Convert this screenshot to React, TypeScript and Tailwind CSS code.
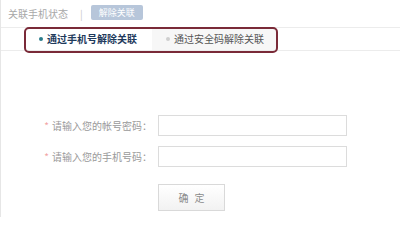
import React from "react";

const font = { fontFamily: '"Noto Sans CJK SC", "Noto Sans", sans-serif' };

function FormRow({ label }: { label: string }) {
  return (
    <div className="flex items-center h-[21px]">
      <div className="w-[118px] text-right text-[10px] leading-none text-[#9a9a9a] whitespace-nowrap">
        <span className="text-[#f2a5a5] mr-[3px]">*</span>
        {label}
      </div>
      <input
        className="ml-[6px] w-[189px] h-[21px] border border-[#dcdcdc] bg-white outline-none"
        type="text"
      />
    </div>
  );
}

export default function App() {
  return (
    <div
      className="relative w-[400px] h-[217px] overflow-hidden bg-white border-l border-[#e6e6e6]"
      style={font}
    >
      {/* status bar */}
      <div className="flex items-center h-[28px] border-b border-[#ececec] pl-[7px]">
        <span className="text-[10px] leading-none text-[#a8a8a8]">关联手机状态</span>
        <span className="ml-[12px] text-[10px] leading-none text-[#c8c8c8]">|</span>
        <span className="ml-[8px] mt-[-3px] flex items-center justify-center w-[52px] h-[15px] rounded-[2px] bg-[#b7c6da] text-[9px] leading-none text-white">
          解除关联
        </span>
      </div>

      {/* tabs */}
      <div className="flex h-[23px] border-b border-[#ececec] pl-[25px]">
        <div className="flex items-center w-[126px] bg-white pl-[13px]">
          <span className="w-[4px] h-[4px] rounded-full bg-[#2b7d8c]" />
          <span className="ml-[4px] text-[10px] leading-none font-bold text-[#1e3a5c]">
            通过手机号解除关联
          </span>
        </div>
        <div className="flex items-center w-[125px] bg-[#f7f7f7] pl-[14px]">
          <span className="w-[4px] h-[4px] rounded-full bg-[#cfcfcf]" />
          <span className="ml-[4px] text-[10px] leading-none text-[#555]">
            通过安全码解除关联
          </span>
        </div>
      </div>

      {/* annotation around tabs */}
      <div className="absolute left-[23px] top-[27px] w-[254px] h-[26px] rounded-[5px] border-2 border-[#7a2a38]" />

      {/* form */}
      <div className="flex flex-col pl-[33px] pt-[64px] gap-[10px]">
        <FormRow label="请输入您的帐号密码：" />
        <FormRow label="请输入您的手机号码：" />
        <div className="pl-[124px] pt-[6px]">
          <button className="w-[67px] h-[27px] border border-[#d9d9d9] bg-gradient-to-b from-white to-[#f2f2f2] text-[10px] text-[#8a8a8a] tracking-[6px] pl-[6px]">
            确定
          </button>
        </div>
      </div>
    </div>
  );
}
